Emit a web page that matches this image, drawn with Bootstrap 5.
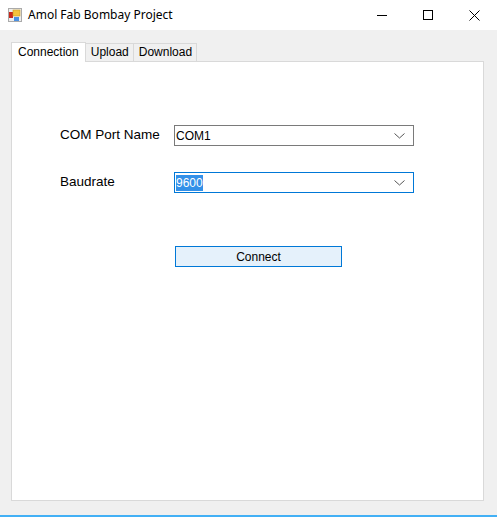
<!DOCTYPE html>
<html lang="en">
<head>
    <meta charset="UTF-8">
    <meta name="viewport" content="width=device-width, initial-scale=1">
    <title>Amol Fab Bombay Project</title>
    <link href="https://cdn.jsdelivr.net/npm/bootstrap@5.3.0/dist/css/bootstrap.min.css" rel="stylesheet">
    <style>
        html, body { height: 517px; overflow: hidden; }
        body { background: #fff; font-family: "Liberation Sans", Arial, sans-serif; color: #000; }

        /* window frame */
        .win-title { height: 30px; padding-left: 8px; }
        .win-title-text { font-family: "Noto Sans", sans-serif; font-size: 12px; margin-left: 6px; color: #000; }
        .win-btn { width: 46px; height: 30px; }
        .win-body { height: 485px; background: #f0f0f0; padding: 12px 13px 14px 11px; border-bottom: 0; }
        .win-edge { height: 2px; background: #42b0f5; }

        /* tabs */
        .win-tabs { border: 0; height: 19px; align-items: flex-end; position: relative; z-index: 1; }
        .win-tab { font-size: 12px; line-height: 16px; height: 18px; border: 1px solid #d9d9d9; border-bottom: 0; border-left: 0; padding: 0 4px 0 5px; color: #000; background: #f0f0f0; }
        .win-tab-on { height: 20px; line-height: 18px; background: #fff; border-left: 1px solid #d9d9d9; padding: 0 6px; margin-bottom: -1px; }
        .win-panel { height: 440px; background: #fff; border: 1px solid #d9d9d9; padding-top: 63px; padding-left: 48px; }

        /* form */
        .field-row { height: 21px; margin-bottom: 26px; }
        .field-label { width: 114px; font-size: 13.5px; }
        .field-combo { width: 240px; height: 21px; border: 1px solid #7a7a7a; font-size: 12px; line-height: 16px; padding: 0 8px 0 1px; }
        .field-combo-on { border-color: #0078d7; }
        .field-sel { background: #3390e8; color: #fff; }
        .connect-btn { width: 167px; height: 21px; margin: 53px 0 0 115px; padding: 0; border: 1px solid #0078d7; border-radius: 0; background: #e5f1fb; font-size: 12px; line-height: 18px; color: #000; }
    </style>
</head>
<body>
    <div class="win-title d-flex align-items-center">
        <svg width="14" height="14" viewBox="0 0 14 14">
            <rect x="0.5" y="0.5" width="13" height="13" fill="#eee" stroke="#aaa"/>
            <rect x="1" y="4" width="4" height="6" fill="#c8281c"/>
            <rect x="5" y="2" width="7" height="6" fill="#f4c23c" stroke="#c89a20" stroke-width="0.6"/>
            <rect x="6" y="9" width="5" height="4" fill="#4a90e2"/>
        </svg>
        <span class="win-title-text flex-grow-1">Amol Fab Bombay Project</span>
        <div class="win-btn d-flex align-items-center justify-content-center">
            <svg width="10" height="10" viewBox="0 0 10 10"><path d="M0 5.5H10" stroke="#000" fill="none"/></svg>
        </div>
        <div class="win-btn d-flex align-items-center justify-content-center">
            <svg width="10" height="10" viewBox="0 0 10 10"><rect x="0.5" y="0.5" width="9" height="9" stroke="#000" fill="none"/></svg>
        </div>
        <div class="win-btn d-flex align-items-center justify-content-center">
            <svg width="11" height="11" viewBox="0 0 11 11"><path d="M0.5 0.5L10.5 10.5M10.5 0.5L0.5 10.5" stroke="#000" fill="none"/></svg>
        </div>
    </div>

    <div class="win-body">
        <ul class="nav win-tabs">
            <li class="nav-item"><a class="nav-link win-tab win-tab-on" href="#">Connection</a></li>
            <li class="nav-item"><a class="nav-link win-tab" href="#">Upload</a></li>
            <li class="nav-item"><a class="nav-link win-tab" href="#">Download</a></li>
        </ul>
        <div class="win-panel">
            <div class="field-row d-flex align-items-center">
                <div class="field-label">COM Port Name</div>
                <div class="field-combo d-flex align-items-center justify-content-between">
                    <span>COM1</span>
                    <svg width="11" height="6" viewBox="0 0 11 6"><path d="M0.5 0.5L5.5 5L10.5 0.5" stroke="#555" fill="none"/></svg>
                </div>
            </div>
            <div class="field-row d-flex align-items-center">
                <div class="field-label">Baudrate</div>
                <div class="field-combo field-combo-on d-flex align-items-center justify-content-between">
                    <span class="field-sel">9600</span>
                    <svg width="11" height="6" viewBox="0 0 11 6"><path d="M0.5 0.5L5.5 5L10.5 0.5" stroke="#555" fill="none"/></svg>
                </div>
            </div>
            <button type="button" class="btn connect-btn d-block">Connect</button>
        </div>
    </div>
    <div class="win-edge"></div>

    <script src="https://cdn.jsdelivr.net/npm/bootstrap@5.3.0/dist/js/bootstrap.bundle.min.js"></script>
</body>
</html>
